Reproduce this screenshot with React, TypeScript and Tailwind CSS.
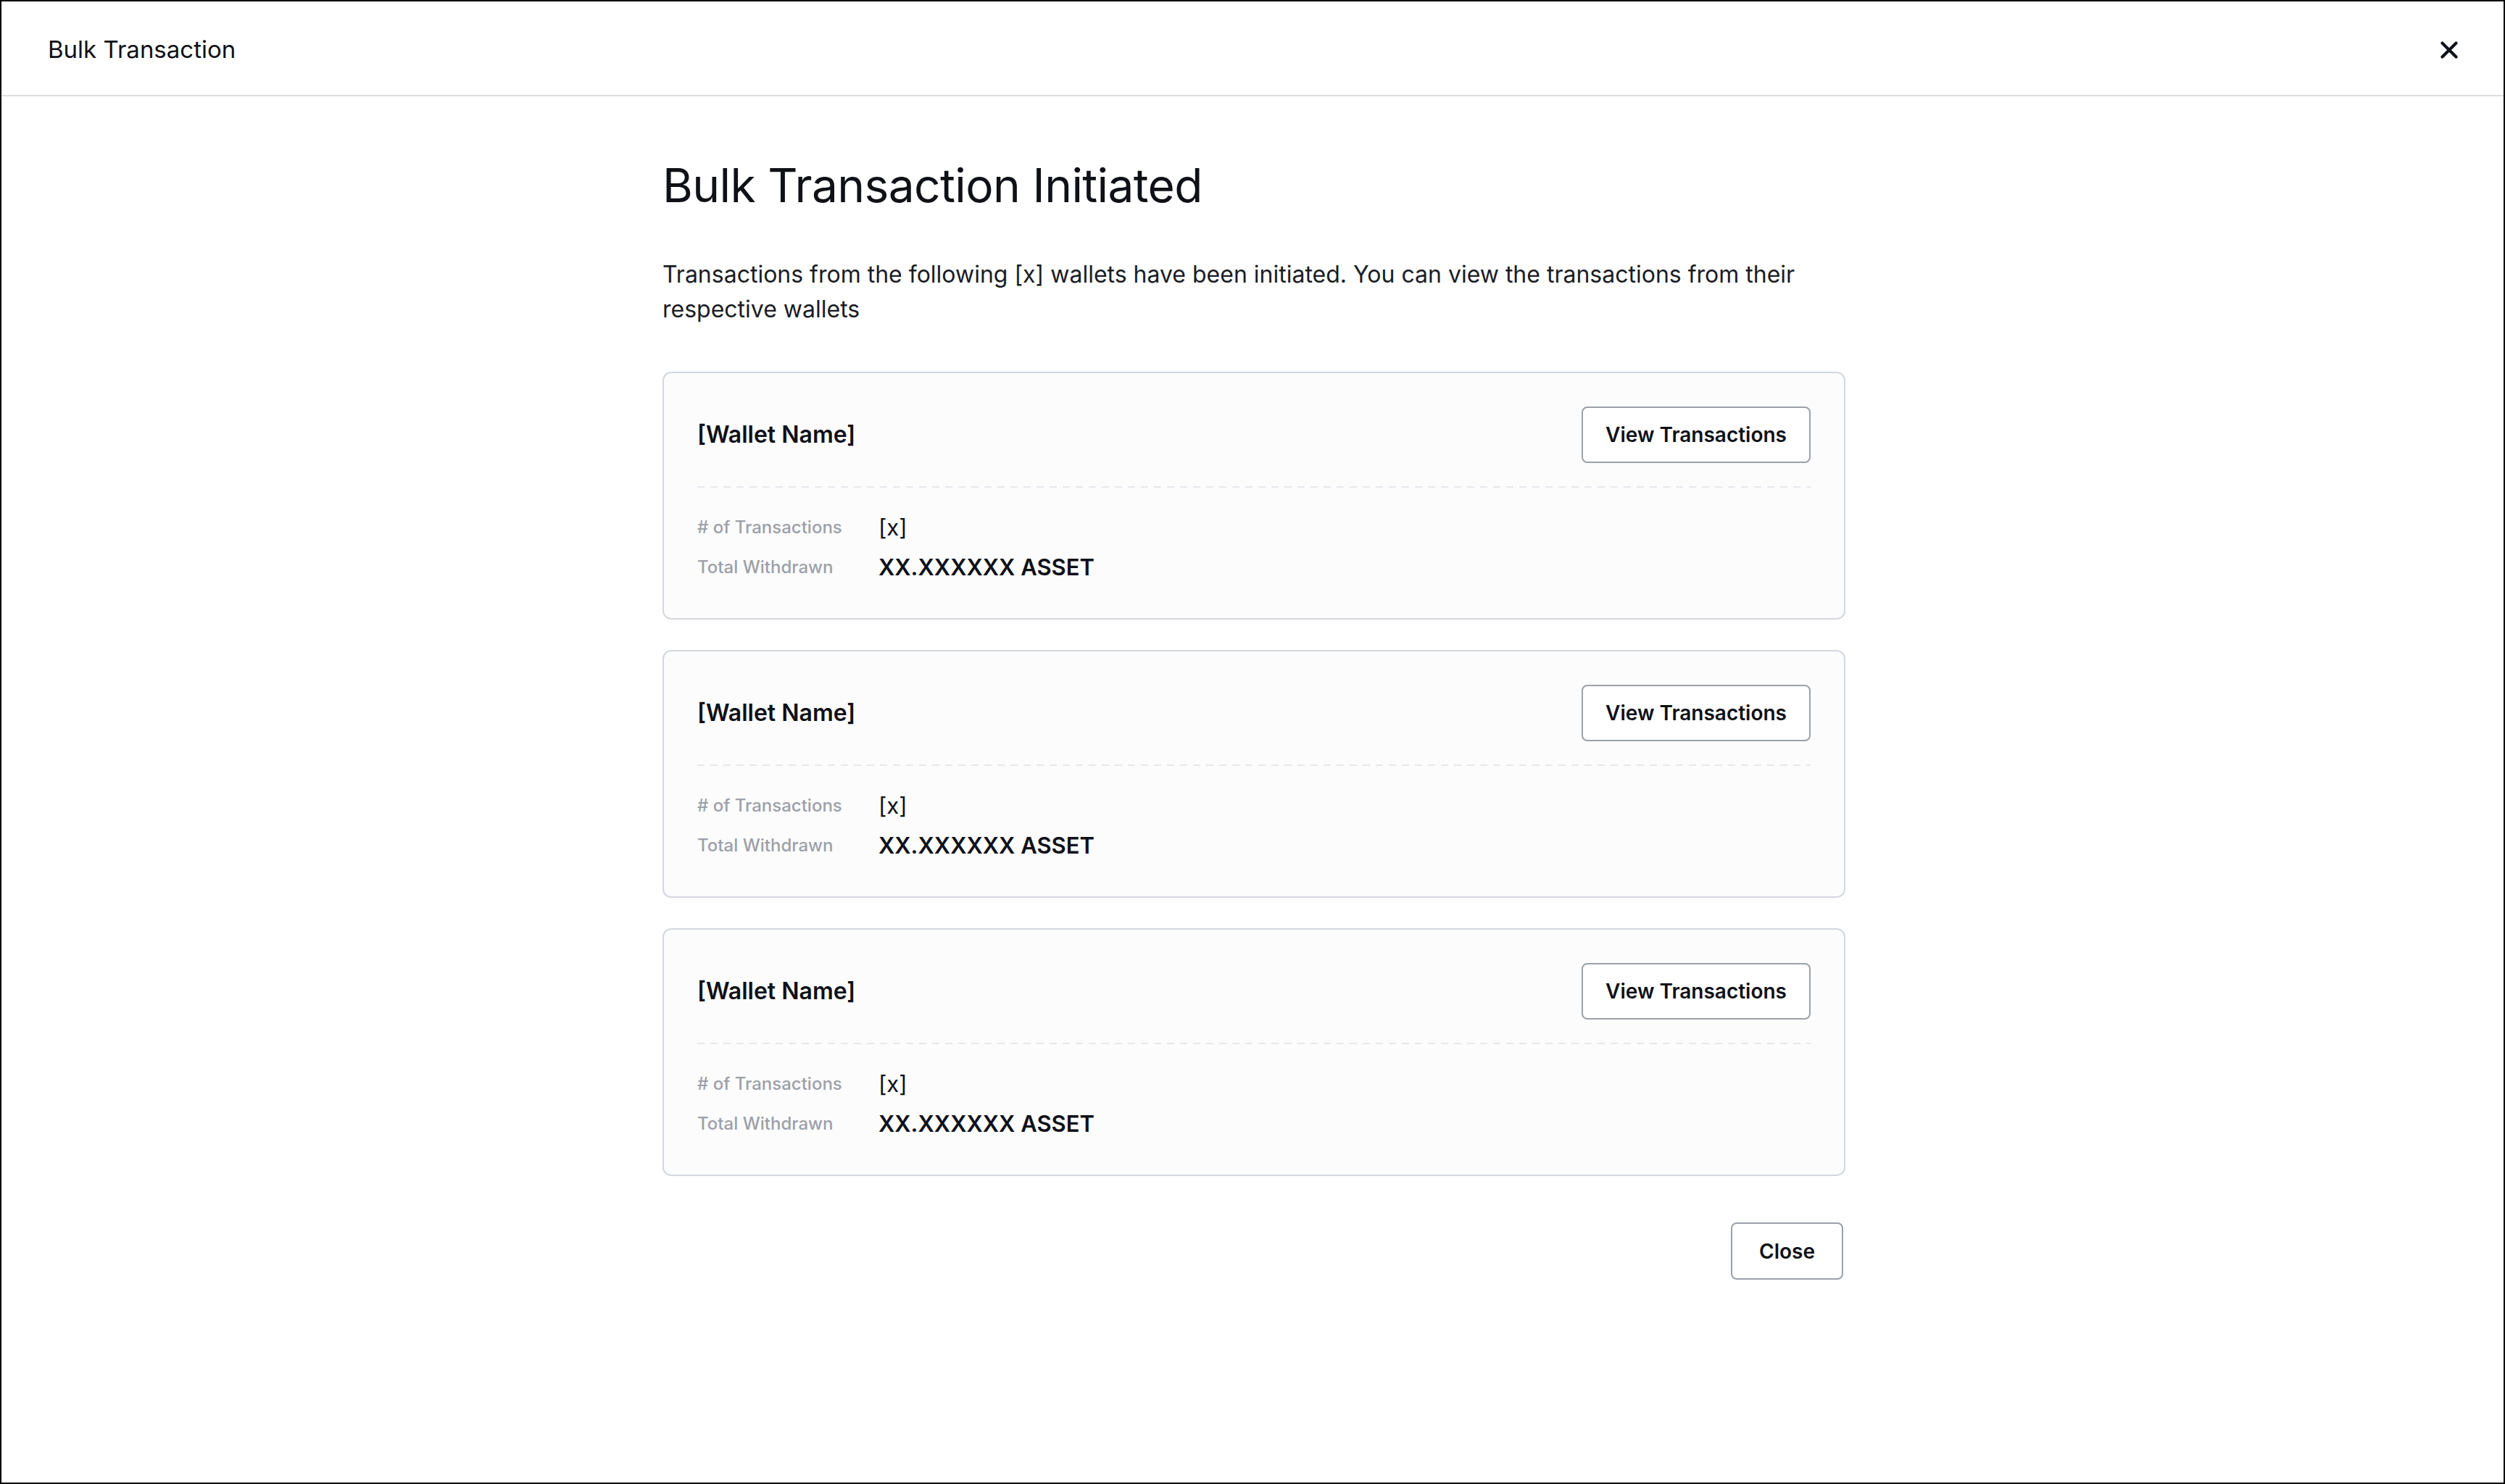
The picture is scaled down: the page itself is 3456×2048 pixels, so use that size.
import React from "react";

function Card() {
  return (
    <div className="rounded-[12px] border-2 border-[#d3d7de] bg-[#fcfcfd] px-[46px] pt-[46px] pb-[50px]">
      <div className="flex items-center justify-between">
        <div className="text-[32px] font-semibold text-[#0f1117] leading-[40px]">[Wallet Name]</div>
        <button className="h-[78px] rounded-[8px] border-2 border-[#9ca0a8] bg-white px-[31px] text-[28px] font-semibold text-[#0f1117] leading-[40px]">
          View Transactions
        </button>
      </div>
      <div className="mt-[32px] h-[2px] w-full bg-[repeating-linear-gradient(to_right,#e6e8ec_0_10px,transparent_10px_18px)]" />
      <div className="mt-[35px] flex flex-col gap-[15px]">
        <div className="flex items-center">
          <div className="w-[250px] text-[24px] font-medium text-[#9ca0a8] leading-[40px]">
            # of Transactions
          </div>
          <div className="text-[31px] text-[#0f1117] leading-[40px]">[x]</div>
        </div>
        <div className="flex items-center">
          <div className="w-[250px] text-[24px] font-medium text-[#9ca0a8] leading-[40px]">
            Total Withdrawn
          </div>
          <div className="text-[31px] font-semibold text-[#0f1117] leading-[40px]">XX.XXXXXX ASSET</div>
        </div>
      </div>
    </div>
  );
}

export default function App() {
  return (
    <div className="w-[3456px] h-[2048px] border-2 border-black bg-white flex flex-col font-['Inter',sans-serif] overflow-hidden">
      <div className="h-[131px] shrink-0 border-b-2 border-[#dedede] flex items-center justify-between px-[64px] pt-[4px]">
        <div className="text-[33px] text-[#0f1117]">Bulk Transaction</div>
        <svg width="24" height="24" viewBox="0 0 24 24" className="mr-[-1px]">
          <path d="M2.5 2.5 L21.5 21.5 M21.5 2.5 L2.5 21.5" stroke="#0f1117" strokeWidth="4.2" strokeLinecap="round" />
        </svg>
      </div>
      <div className="flex justify-center pt-[91px] pl-[4px]">
        <div className="w-[1632px] flex flex-col">
          <h1 className="text-[64px] leading-[64px] text-[#0f1117] font-normal tracking-[-0.6px]">
            Bulk Transaction Initiated
          </h1>
          <p className="mt-[67px] text-[32px] leading-[48px] text-[#1a1d24]">
            Transactions from the following [x] wallets have been initiated. You can view the transactions from their
            respective wallets
          </p>
          <div className="mt-[62px] flex flex-col gap-[42px]">
            <Card />
            <Card />
            <Card />
          </div>
          <div className="mt-[64px] flex justify-end pr-[3px]">
            <button className="h-[79px] rounded-[8px] border-2 border-[#9ca0a8] bg-white px-[37px] text-[28px] font-semibold text-[#0f1117] leading-[40px]">
              Close
            </button>
          </div>
        </div>
      </div>
    </div>
  );
}
